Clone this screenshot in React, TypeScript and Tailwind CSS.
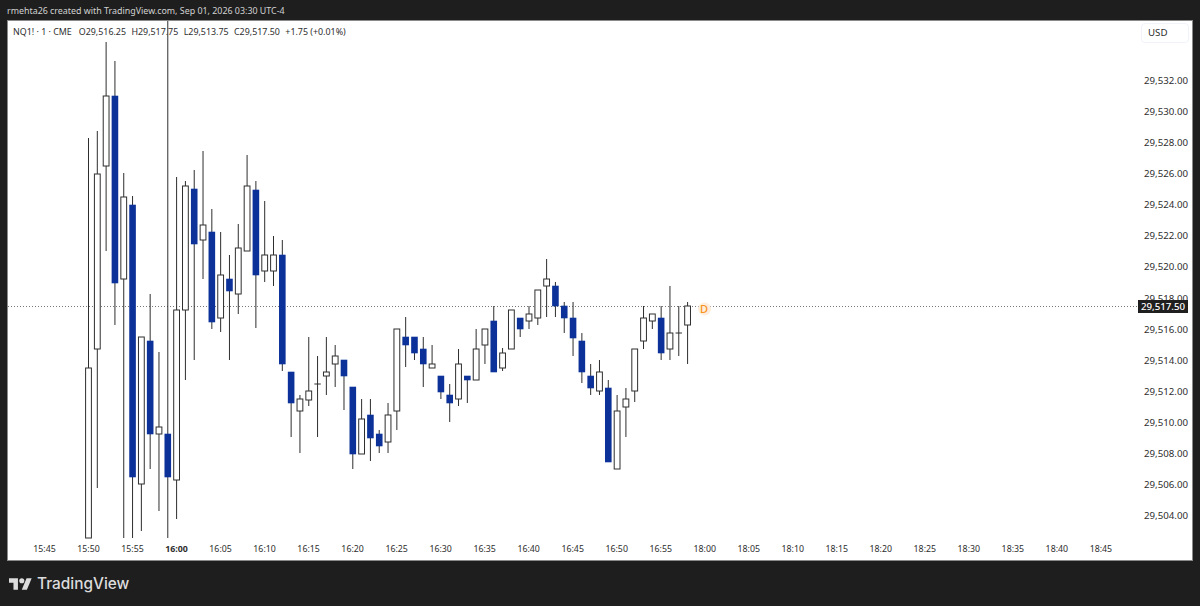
const candles: [number, number, number, number, number][] = [
  // wick top, wick bottom, body top, body bottom, 1 = up (white) 0 = down (blue)
  [138, 538, 368, 538, 1],
  [131, 488, 174, 349, 1],
  [42, 251, 96, 166, 1],
  [61, 325, 96, 283, 0],
  [173, 538, 197, 279, 1],
  [196, 538, 205, 477, 0],
  [337, 531, 337, 484, 1],
  [294, 469, 341, 434, 0],
  [352, 511, 427, 434, 1],
  [18, 538, 434, 477, 0],
  [177, 519, 310, 480, 1],
  [181, 380, 186, 310, 1],
  [170, 360, 189, 244, 0],
  [151, 279, 225, 240, 1],
  [209, 329, 232, 322, 0],
  [232, 332, 275, 318, 1],
  [255, 360, 279, 291, 0],
  [224, 314, 248, 294, 1],
  [155, 251, 186, 251, 1],
  [181, 328, 190, 275, 0],
  [201, 282, 255, 271, 1],
  [236, 286, 255, 271, 1],
  [240, 371, 255, 364, 0],
  [372, 437, 372, 403, 0],
  [395, 453, 399, 411, 1],
  [337, 406, 391, 400, 1],
  [356, 437, 384, 384, 1],
  [337, 395, 372, 376, 1],
  [345, 387, 356, 364, 1],
  [360, 410, 360, 376, 0],
  [387, 469, 387, 454, 0],
  [399, 454, 419, 454, 1],
  [399, 461, 415, 438, 0],
  [430, 453, 434, 446, 0],
  [403, 453, 415, 442, 1],
  [329, 430, 329, 411, 1],
  [317, 367, 337, 345, 0],
  [337, 360, 337, 353, 0],
  [337, 387, 349, 364, 0],
  [345, 368, 364, 368, 1],
  [376, 399, 376, 392, 0],
  [384, 422, 395, 403, 0],
  [349, 406, 364, 399, 1],
  [376, 403, 376, 380, 0],
  [329, 380, 349, 380, 1],
  [329, 364, 329, 345, 1],
  [306, 372, 321, 372, 0],
  [348, 371, 353, 368, 1],
  [310, 349, 310, 349, 1],
  [318, 337, 318, 329, 0],
  [306, 329, 314, 321, 1],
  [290, 325, 290, 318, 1],
  [259, 317, 279, 286, 1],
  [282, 317, 286, 306, 0],
  [302, 333, 306, 318, 0],
  [302, 356, 318, 338, 0],
  [333, 383, 341, 372, 0],
  [364, 395, 376, 388, 0],
  [360, 395, 372, 391, 1],
  [380, 462, 388, 462, 0],
  [395, 469, 411, 469, 1],
  [388, 437, 399, 407, 1],
  [349, 402, 349, 391, 1],
  [306, 349, 318, 341, 1],
  [314, 329, 314, 321, 1],
  [306, 360, 318, 353, 0],
  [286, 360, 333, 349, 1],
  [306, 356, 333, 333, 1],
  [302, 364, 306, 325, 1],
]

const prices = ['29,532.00', '29,530.00', '29,528.00', '29,526.00', '29,524.00', '29,522.00', '29,520.00', '29,518.00', '29,516.00', '29,514.00', '29,512.00', '29,510.00', '29,508.00', '29,506.00', '29,504.00']

const times = ['15:45', '15:50', '15:55', '16:00', '16:05', '16:10', '16:15', '16:20', '16:25', '16:30', '16:35', '16:40', '16:45', '16:50', '16:55', '18:00', '18:05', '18:10', '18:15', '18:20', '18:25', '18:30', '18:35', '18:40', '18:45']

function Chart() {
  return (
    <svg viewBox="8 21 1129 519" className="block w-full h-full">
      <line x1="8" x2="1137" y1="306.5" y2="306.5" stroke="#777" strokeWidth="1" strokeDasharray="1 2" />
      {candles.map(([hi, lo, top, bottom, up], i) => {
        const x = 88.5 + i * 8.81
        return (
          <g key={i}>
            <line x1={x} x2={x} y1={Math.max(hi, 21)} y2={lo} stroke="#2e2e2e" strokeWidth="1" />
            {top === bottom ? (
              <line x1={x - 3.2} x2={x + 3.2} y1={top} y2={top} stroke="#2e2e2e" strokeWidth="1" />
            ) : up ? (
              <rect x={x - 2.9} y={top} width="5.8" height={bottom - top} fill="#fff" stroke="#2e2e2e" strokeWidth="1" />
            ) : (
              <rect x={x - 3.3} y={top - 0.3} width="6.6" height={bottom - top + 0.6} fill="#0c3299" />
            )}
          </g>
        )
      })}
      <circle cx="704.5" cy="309" r="6.5" fill="#fdeedd" />
    </svg>
  )
}

export default function App() {
  return (
    <div className="w-[1200px] h-[606px] flex flex-col bg-[#1e1e1e] overflow-hidden font-['Noto_Sans',sans-serif]">
      {/* Header */}
      <div className="h-5 pl-[7px] pt-[3px] text-[8.9px] leading-[16px] text-[#d2d2d2] whitespace-nowrap">
        rmehta26 created with TradingView.com, Sep 01, 2026 03:30 UTC-4
      </div>

      {/* Chart panel */}
      <div className="ml-[7px] w-[1186px] h-[541px] flex flex-col border border-[#8a8a8a] bg-white text-[#2e2e2e]">
        <div className="flex-1 flex min-h-0">
          <div className="relative w-[1129px]">
            <Chart />
            <div className="absolute left-[5px] top-[3px] flex gap-[5.4px] text-[8.9px] leading-[16px] whitespace-nowrap">
              <span className="mr-[1.6px]">NQ1! · 1 · CME</span>
              <span>O29,516.25</span>
              <span>H29,517.75</span>
              <span>L29,513.75</span>
              <span>C29,517.50</span>
              <span>+1.75 (+0.01%)</span>
            </div>
            <span className="absolute left-[691px] top-[281px] w-[10px] text-center text-[11px] leading-[13px] font-medium text-[#f7931e]">D</span>
          </div>

          {/* Price axis */}
          <div className="relative w-[55px] pl-[7px] pr-[4px] pt-[2px] text-[9.7px]">
            <div className="h-5 w-12 -ml-[3px] pl-[6px] rounded border border-[#f0f3fa] leading-[18px]">USD</div>
            <div className="mt-[22.4px] flex flex-col items-end">
              {prices.map((p) => (
                <div key={p} className="h-[31.14px] flex items-center">{p}</div>
              ))}
            </div>
            <div className="absolute left-[1px] top-[279px] w-[50px] h-[13px] bg-[#1f1f1f] text-white font-medium leading-[13px] text-center">29,517.50</div>
          </div>
        </div>

        {/* Time axis */}
        <div className="h-5 flex pl-[14.5px] items-center text-[8.8px]">
          {times.map((t) => (
            <div key={t} className={`w-[44.03px] text-center ${t === '16:00' ? 'font-bold' : ''}`}>{t}</div>
          ))}
        </div>
      </div>

      {/* Footer */}
      <div className="flex-1 flex items-center pl-[9px] pt-[1px] gap-[5px]">
        <svg viewBox="0 4 36 18" className="w-[23px] h-[12px]" fill="#dcdcdc">
          <path d="M14 22H7V11H0V4h14v18zM28 22h-8l7.5-18h8L28 22z" />
          <circle cx="20" cy="8" r="4" />
        </svg>
        <span className="text-[15.4px] leading-[20px] font-medium text-[#dcdcdc] font-['Inter',sans-serif]">TradingView</span>
      </div>
    </div>
  )
}
